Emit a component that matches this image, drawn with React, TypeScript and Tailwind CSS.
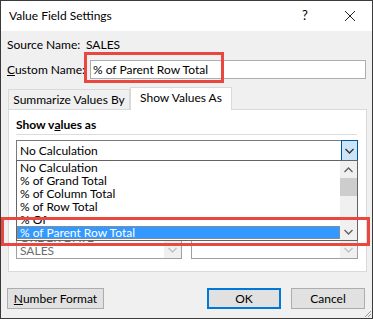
import React from "react";

function Chevron({ up = false, color = "#333" }: { up?: boolean; color?: string }) {
  return (
    <svg width="9" height="6" viewBox="0 0 9 6">
      <polyline
        points={up ? "0.5,5 4.5,1 8.5,5" : "0.5,1 4.5,5 8.5,1"}
        fill="none"
        stroke={color}
        strokeWidth="1.3"
      />
    </svg>
  );
}

const items = [
  "No Calculation",
  "% of Grand Total",
  "% of Column Total",
  "% of Row Total",
  "% Of",
  "% of Parent Row Total",
];

export default function App() {
  return (
    <div className="relative w-[373px] h-[319px] overflow-hidden bg-[#f0f0f0] border border-[#3a3a3a] flex flex-col text-[12px] text-black font-[Lato,'Noto_Sans',sans-serif]">
      {/* Title bar */}
      <div className="h-[30px] bg-white flex items-center pl-[8px] shrink-0">
        <span className="flex-1">Value Field Settings</span>
        <span className="w-[10px] mr-[32px] text-[13px]">?</span>
        <svg width="12" height="12" viewBox="0 0 12 12" className="mr-[16px]">
          <line x1="1" y1="1" x2="11" y2="11" stroke="#222" strokeWidth="1" />
          <line x1="11" y1="1" x2="1" y2="11" stroke="#222" strokeWidth="1" />
        </svg>
      </div>

      {/* Source name */}
      <div className="flex items-center h-[16px] mt-[6px] pl-[6px]">
        <span className="w-[79px]">Source Name:</span>
        <span>SALES</span>
      </div>

      {/* Custom name */}
      <div className="flex items-center h-[19px] mt-[7px] pl-[6px]">
        <span className="w-[83px]">
          <span className="underline">C</span>ustom Name:
        </span>
        <div className="w-[276px] h-[19px] bg-white border border-[#adadad] flex items-center pl-[2px]">
          % of Parent Row Total
        </div>
      </div>

      {/* Tabs */}
      <div className="flex items-end h-[22px] mt-[8px] ml-[7px]">
        <div className="w-[122px] h-[20px] border border-b-0 border-[#d9d9d9] flex items-center justify-center">
          Summarize Values By
        </div>
        <div className="relative z-10 -mb-px w-[102px] h-[23px] bg-white border border-b-0 border-[#d9d9d9] flex items-center justify-center pb-[2px]">
          Show Values As
        </div>
      </div>

      {/* Panel */}
      <div className="ml-[7px] w-[359px] h-[163px] bg-white border border-[#d9d9d9] pl-[7px] shrink-0">
        <div className="h-[16px] mt-[7px] flex items-center font-bold">
          Show v<span className="underline">a</span>lues as
        </div>
        <div className="w-[341px] h-px bg-[#dcdcdc] mt-[1px]" />

        {/* Combo */}
        <div className="relative mt-[5px] w-[342px] h-[21px] bg-white border border-[#7a7a7a] flex items-center z-20">
          <span className="flex-1 pl-[3px]">No Calculation</span>
          <div className="w-[17px] h-[21px] -my-px -mr-px bg-[#cce4f7] border border-[#005499] flex items-center justify-center">
            <Chevron />
          </div>

          {/* Dropdown list */}
          <div className="absolute left-[-1px] top-[19px] w-[342px] h-[81px] bg-white border border-[#646464] flex">
            <div className="flex-1 flex flex-col">
              {items.map((it, i) =>
                i === items.length - 1 ? (
                  <div
                    key={it}
                    className="h-[13px] leading-[13px] pl-[3px] bg-[#3399ff] text-white outline outline-1 outline-dotted outline-[#c8863c] -outline-offset-1"
                  >
                    {it}
                  </div>
                ) : (
                  <div key={it} className="h-[13px] leading-[13px] pl-[3px]">
                    {it}
                  </div>
                )
              )}
            </div>
            <div className="w-[17px] bg-[#f0f0f0] flex flex-col">
              <div className="h-[17px] flex items-center justify-center">
                <Chevron up color="#606060" />
              </div>
              <div className="flex-1">
                <div className="h-[18px] bg-[#cdcdcd]" />
              </div>
              <div className="h-[17px] flex items-center justify-center">
                <Chevron color="#606060" />
              </div>
            </div>
          </div>
        </div>

        {/* Base field / item (mostly hidden behind the open list) */}
        <div className="flex mt-[38px] gap-[9px]">
          <div className="w-[166px] h-[60px] border border-[#a0a0a0] flex">
            <div className="flex-1 flex flex-col justify-end text-[#6d6d6d]">
              <div className="h-[13px] leading-[13px] pl-[3px]">ORDER DATE</div>
              <div className="h-[13px] leading-[13px] pl-[3px] mb-px">SALES</div>
            </div>
            <div className="w-[17px] flex flex-col justify-end">
              <div className="h-[17px] bg-[#f0f0f0] flex items-center justify-center">
                <Chevron color="#c0c0c0" />
              </div>
            </div>
          </div>
          <div className="w-[167px] h-[60px] border border-[#a0a0a0] flex">
            <div className="flex-1" />
            <div className="w-[17px] flex flex-col justify-end">
              <div className="h-[17px] bg-[#f0f0f0] flex items-center justify-center">
                <Chevron color="#c0c0c0" />
              </div>
            </div>
          </div>
        </div>
      </div>

      {/* Buttons */}
      <div className="flex mt-[16px] pl-[6px] pr-[7px]">
        <button className="w-[97px] h-[21px] bg-[#e1e1e1] border border-[#adadad] flex items-center justify-center">
          <span>
            <span className="underline">N</span>umber Format
          </span>
        </button>
        <div className="flex-1" />
        <button className="w-[74px] h-[21px] bg-[#e1e1e1] border-2 border-[#0078d7] flex items-center justify-center">
          OK
        </button>
        <button className="ml-[10px] w-[74px] h-[21px] bg-[#e1e1e1] border border-[#adadad] flex items-center justify-center">
          Cancel
        </button>
      </div>

      {/* Resize grip */}
      <svg width="8" height="8" viewBox="0 0 8 8" className="absolute right-0 bottom-0">
        <line x1="7" y1="1" x2="1" y2="7" stroke="#9a9a9a" />
        <line x1="7" y1="4" x2="4" y2="7" stroke="#9a9a9a" />
      </svg>

      {/* Red highlight boxes */}
      <div className="absolute left-[83px] top-[51px] w-[140px] h-[31px] border-[3px] border-[#e8483f] z-30" />
      <div className="absolute left-0 top-[216px] w-[369px] h-[29px] border-[3px] border-[#e8483f] z-30" />
    </div>
  );
}
